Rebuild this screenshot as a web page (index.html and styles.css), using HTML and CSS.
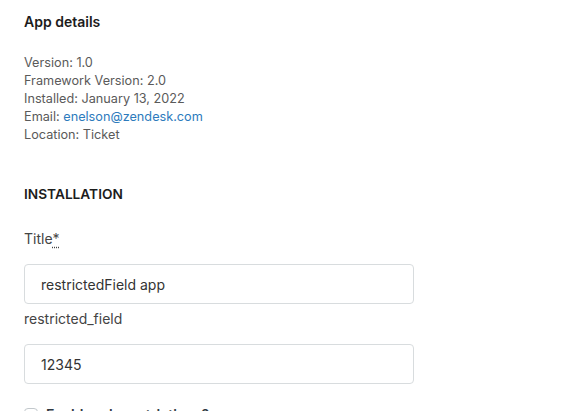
FILE: index.html
```html
<!DOCTYPE html>
<html>
<head>
<meta charset="utf-8">
<link rel="stylesheet" href="styles.css">
</head>
<body>
<div class="page">
  <h2 class="heading">App details</h2>
  <ul class="details">
    <li>Version: 1.0</li>
    <li>Framework Version: 2.0</li>
    <li>Installed: January 13, 2022</li>
    <li>Email: <a class="link" href="#">enelson@zendesk.com</a></li>
    <li>Location: Ticket</li>
  </ul>
  <h3 class="section">INSTALLATION</h3>
  <div class="field">
    <label class="label">Title<abbr class="req" title="required">*</abbr></label>
    <div class="input">restrictedField app</div>
  </div>
  <div class="field field-tight">
    <label class="label">restricted_field</label>
    <div class="input">12345</div>
  </div>
  <div class="check">
    <span class="box"></span>
    <span class="check-label">Enable role restrictions?</span>
  </div>
</div>
</body>
</html>
```
FILE: styles.css
```css
html, body {
  margin: 0;
  padding: 0;
  background: #fff;
}
body {
  font-family: Inter, "Noto Sans", "Liberation Sans", sans-serif;
  color: #2f3941;
}
.page {
  padding: 12px 24px 0;
  display: flex;
  flex-direction: column;
}
.heading {
  margin: 0;
  font-size: 14px;
  line-height: 20px;
  font-weight: 600;
  color: #1c1c1c;
}
.details {
  list-style: none;
  margin: 22px 0 0;
  padding: 0;
  font-size: 12.7px;
  line-height: 18px;
  color: #5a5a5a;
}
.link {
  color: #2d7bbd;
  text-decoration: none;
}
.section {
  margin: 40px 0 0;
  font-size: 13.7px;
  line-height: 20px;
  font-weight: 600;
  color: #1c1c1c;
}
.field {
  display: flex;
  flex-direction: column;
  margin-top: 25px;
}
.field-tight {
  margin-top: 5px;
}
.label {
  font-size: 14px;
  line-height: 20px;
  color: #444;
  margin-bottom: 15px;
}
.req {
  text-decoration: underline dotted;
  text-underline-offset: 3px;
}
.input {
  box-sizing: border-box;
  width: 390px;
  height: 40px;
  border: 1px solid #d8dcde;
  border-radius: 4px;
  padding: 0 16px;
  display: flex;
  align-items: center;
  font-size: 14px;
  color: #333;
}
.check {
  display: flex;
  align-items: center;
  gap: 8px;
  margin-top: 21px;
}
.box {
  box-sizing: border-box;
  width: 14px;
  height: 14px;
  border: 1px solid #c2c8cc;
  border-radius: 4px;
}
.check-label {
  font-size: 14px;
  line-height: 20px;
  font-weight: 600;
  color: #2f3941;
}
```
